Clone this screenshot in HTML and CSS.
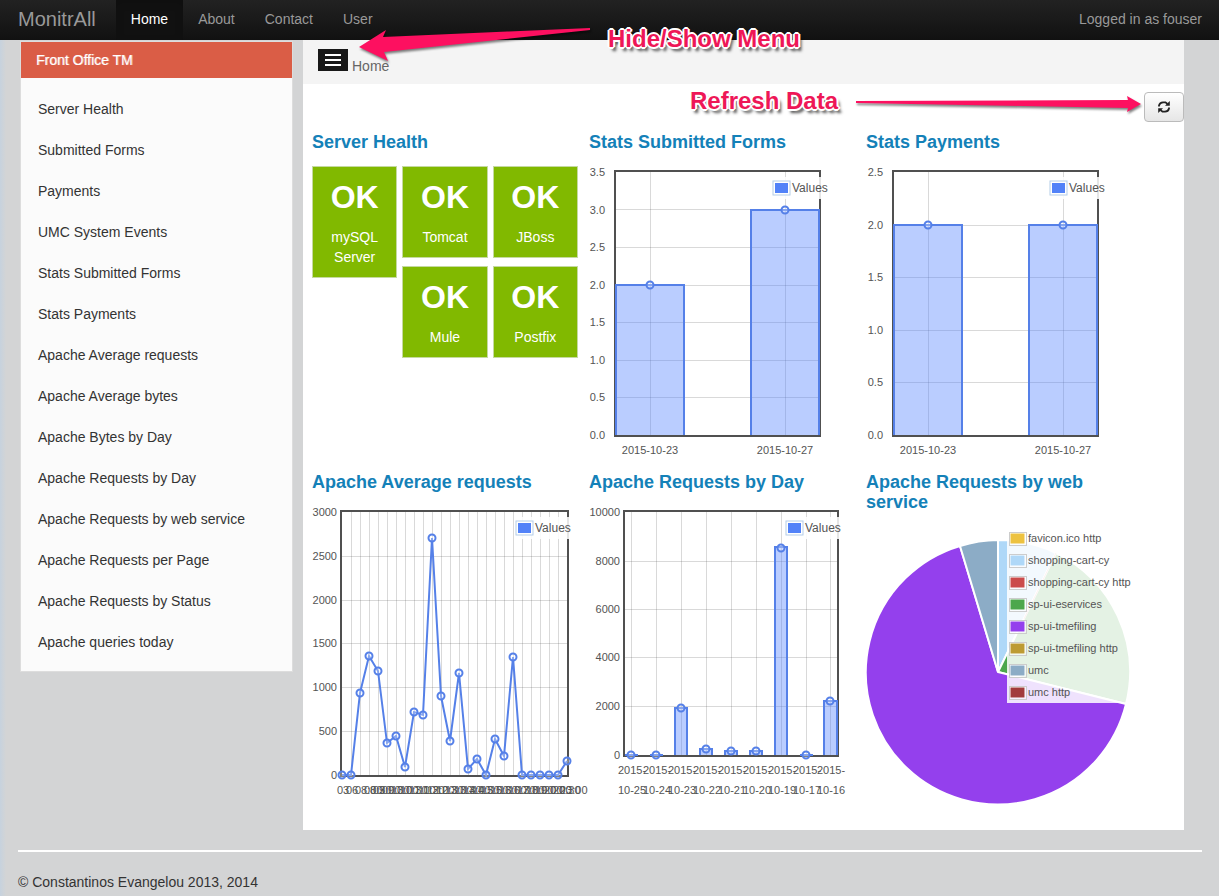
FILE: index.html
```html
<!DOCTYPE html>
<html lang="en">
<head>
<meta charset="utf-8">
<title>MonitrAll</title>
<link rel="stylesheet" href="styles.css">
</head>
<body>
<svg class="defs" aria-hidden="true">
  <defs>
    <marker id="dot" markerUnits="userSpaceOnUse" markerWidth="10" markerHeight="10" refX="5" refY="5">
      <circle class="dot" cx="5" cy="5" r="3.500"/>
    </marker>
  </defs>
</svg>

<header class="navbar">
  <a class="brand" href="#">MonitrAll</a>
  <nav class="nav">
    <a class="nav-link active" href="#">Home</a>
    <a class="nav-link" href="#">About</a>
    <a class="nav-link" href="#">Contact</a>
    <a class="nav-link" href="#">User</a>
  </nav>
  <span class="login">Logged in as fouser</span>
</header>

<div class="layout">
  <aside class="sidebar">
    <h2 class="side-title">Front Office TM</h2>
    <ul class="side-list">
      <li><a href="#">Server Health</a></li>
      <li><a href="#">Submitted Forms</a></li>
      <li><a href="#">Payments</a></li>
      <li><a href="#">UMC System Events</a></li>
      <li><a href="#">Stats Submitted Forms</a></li>
      <li><a href="#">Stats Payments</a></li>
      <li><a href="#">Apache Average requests</a></li>
      <li><a href="#">Apache Average bytes</a></li>
      <li><a href="#">Apache Bytes by Day</a></li>
      <li><a href="#">Apache Requests by Day</a></li>
      <li><a href="#">Apache Requests by web service</a></li>
      <li><a href="#">Apache Requests per Page</a></li>
      <li><a href="#">Apache Requests by Status</a></li>
      <li><a href="#">Apache queries today</a></li>
    </ul>
  </aside>

  <main class="content">
    <div class="crumbs">
      <button class="menu-btn" type="button" aria-label="Hide or show menu">
        <svg width="16" height="12" viewBox="0 0 16 12"><path d="M0 1h16M0 6h16M0 11h16" stroke="#fff" stroke-width="2"/></svg>
      </button>
      <span class="crumb">Home</span>
    </div>
    <div class="tools">
      <button class="refresh" type="button" aria-label="Refresh data">
        <svg width="14" height="14" viewBox="0 0 14 14">
          <path d="M2 6.500V5.500A4.200 4.200 0 0 1 6 2.300H8.500L10.500 4M12 7.500V8.500A4.200 4.200 0 0 1 8 11.700H5.500L3.500 10" fill="none" stroke="#222" stroke-width="1.800"/>
          <path d="M12.800 1v4.800H8zM1.200 13V8.200H6z" fill="#222"/>
        </svg>
      </button>
    </div>

    <div class="grid">
      <section class="card">
        <h4>Server Health</h4>
        <div class="tiles">
          <div class="tile tall"><strong>OK</strong><span>mySQL Server</span></div>
          <div class="tile"><strong>OK</strong><span>Tomcat</span></div>
          <div class="tile"><strong>OK</strong><span>JBoss</span></div>
          <div class="tile"><strong>OK</strong><span>Mule</span></div>
          <div class="tile"><strong>OK</strong><span>Postfix</span></div>
        </div>
      </section>

      <section class="card">
        <h4>Stats Submitted Forms</h4>
        <svg class="chart" viewBox="0 0 277 300" role="img" aria-label="Stats Submitted Forms">
          <rect class="frame" x="26" y="9" width="205" height="265"/>
          <path class="rules" d="M27 47.500H230M27 85.500H230M27 123.500H230M27 160.500H230M27 198.500H230M27 235.500H230M61.500 10V273M196.500 10V273"/>
          <path class="bar" d="M27 273V123H95V273M162 273V48H230V273"/>
          <circle class="dot" cx="61" cy="123" r="3.500"/><circle class="dot" cx="196" cy="48" r="3.500"/>
          <g class="ylab"><text x="16" y="14">3.5</text><text x="16" y="52">3.0</text><text x="16" y="89">2.5</text><text x="16" y="127">2.0</text><text x="16" y="164">1.5</text><text x="16" y="202">1.0</text><text x="16" y="239">0.5</text><text x="16" y="277">0.0</text></g>
          <g class="xlab"><text x="61" y="292">2015-10-23</text><text x="196" y="292">2015-10-27</text></g>
          <rect class="legend" x="182" y="15" width="58" height="22"/>
          <rect class="key" x="184" y="19" width="17" height="14"/><rect class="fill" x="186" y="21" width="13" height="10"/>
          <text x="203" y="30">Values</text>
        </svg>
      </section>

      <section class="card">
        <h4>Stats Payments</h4>
        <svg class="chart" viewBox="0 0 277 300" role="img" aria-label="Stats Payments">
          <rect class="frame" x="27" y="9" width="205" height="265"/>
          <path class="rules" d="M28 63.500H231M28 115.500H231M28 168.500H231M28 220.500H231M62.500 10V273M197.500 10V273"/>
          <path class="bar" d="M28 273V63H96V273M163 273V63H231V273"/>
          <circle class="dot" cx="62" cy="63" r="3.500"/><circle class="dot" cx="197" cy="63" r="3.500"/>
          <g class="ylab"><text x="17" y="14">2.5</text><text x="17" y="67">2.0</text><text x="17" y="119">1.5</text><text x="17" y="172">1.0</text><text x="17" y="224">0.5</text><text x="17" y="277">0.0</text></g>
          <g class="xlab"><text x="62" y="292">2015-10-23</text><text x="197" y="292">2015-10-27</text></g>
          <rect class="legend" x="182" y="15" width="58" height="22"/>
          <rect class="key" x="184" y="19" width="17" height="14"/><rect class="fill" x="186" y="21" width="13" height="10"/>
          <text x="203" y="30">Values</text>
        </svg>
      </section>

      <section class="card">
        <h4>Apache Average requests</h4>
        <svg class="chart" viewBox="0 0 277 300" role="img" aria-label="Apache Average requests">
          <rect class="frame" x="29" y="9" width="227" height="265"/>
          <path class="rules" d="M30 54.500H255M30 98.500H255M30 141.500H255M30 185.500H255M30 229.500H255M39.500 10V273M48.500 10V273M57.500 10V273M66.500 10V273M75.500 10V273M84.500 10V273M93.500 10V273M102.500 10V273M111.500 10V273M120.500 10V273M129.500 10V273M138.500 10V273M147.500 10V273M156.500 10V273M165.500 10V273M174.500 10V273M183.500 10V273M192.500 10V273M201.500 10V273M210.500 10V273M219.500 10V273M228.500 10V273M237.500 10V273M246.500 10V273"/>
          <polyline class="line" points="30,273 39,273 48,191 57,154 66,169 75,241 84,234 93,265 102,210 111,213 120,36 129,194 138,239 147,171 156,267 165,257 174,273 183,237 192,254 201,155 210,273 219,273 228,273 237,273 246,273 255,259"/>
          <g class="ylab"><text x="25" y="14">3000</text><text x="25" y="58">2500</text><text x="25" y="102">2000</text><text x="25" y="145">1500</text><text x="25" y="189">1000</text><text x="25" y="233">500</text><text x="25" y="277">0</text></g>
          <g class="times"><text x="25" y="292">03</text><text x="34" y="292">06</text><text x="43" y="292">08:00</text><text x="52" y="292">08:30</text><text x="61" y="292">09:00</text><text x="70" y="292">09:30</text><text x="79" y="292">10:00</text><text x="88" y="292">10:30</text><text x="97" y="292">11:00</text><text x="106" y="292">11:30</text><text x="115" y="292">12:00</text><text x="124" y="292">12:30</text><text x="133" y="292">13:00</text><text x="142" y="292">13:30</text><text x="151" y="292">14:00</text><text x="160" y="292">14:30</text><text x="169" y="292">15:00</text><text x="178" y="292">15:30</text><text x="187" y="292">16:00</text><text x="196" y="292">16:30</text><text x="205" y="292">17:00</text><text x="214" y="292">18:00</text><text x="223" y="292">19:00</text><text x="232" y="292">20:00</text><text x="241" y="292">20:30</text><text x="248" y="292">23:00</text></g>
          <rect class="legend" x="202" y="15" width="57" height="22"/>
          <rect class="key" x="204" y="19" width="17" height="14"/><rect class="fill" x="206" y="21" width="13" height="10"/>
          <text x="223" y="30">Values</text>
        </svg>
      </section>

      <section class="card">
        <h4>Apache Requests by Day</h4>
        <svg class="chart" viewBox="0 0 277 300" role="img" aria-label="Apache Requests by Day">
          <rect class="frame" x="35" y="9" width="214" height="245"/>
          <path class="rules" d="M36 59.500H248M36 107.500H248M36 155.500H248M36 204.500H248M42.500 10V253M67.500 10V253M92.500 10V253M117.500 10V253M142.500 10V253M167.500 10V253M192.500 10V253M217.500 10V253M241.500 10V253"/>
          <path class="bar" d="M36 253H49M61 253H74M86 253V206H98V253M111 253V247H123V253M136 253V249H148V253M161 253V249H173V253M186 253V45H198V253M211 253H224M235 253V199H248V253"/>
          <polyline class="dots" points="42,253 67,253 92,206 117,247 142,249 167,249 192,46 217,253 241,199"/>
          <g class="ylab"><text x="31" y="14">10000</text><text x="31" y="63">8000</text><text x="31" y="111">6000</text><text x="31" y="159">4000</text><text x="31" y="208">2000</text><text x="31" y="257">0</text></g>
          <g class="xlab"><text x="43" y="272">2015-</text><text x="68" y="272">2015-</text><text x="93" y="272">2015-</text><text x="118" y="272">2015-</text><text x="143" y="272">2015-</text><text x="168" y="272">2015-</text><text x="193" y="272">2015-</text><text x="218" y="272">2015-</text><text x="242" y="272">2015-</text>
          <text x="43" y="292">10-25</text><text x="68" y="292">10-24</text><text x="93" y="292">10-23</text><text x="118" y="292">10-22</text><text x="143" y="292">10-21</text><text x="168" y="292">10-20</text><text x="193" y="292">10-19</text><text x="218" y="292">10-17</text><text x="242" y="292">10-16</text></g>
          <rect class="legend" x="195" y="15" width="58" height="22"/>
          <rect class="key" x="197" y="19" width="17" height="14"/><rect class="fill" x="199" y="21" width="13" height="10"/>
          <text x="216" y="30">Values</text>
        </svg>
      </section>

      <section class="card">
        <h4>Apache Requests by web service</h4>
        <svg class="chart" viewBox="0 0 277 300" role="img" aria-label="Apache Requests by web service">
          <g class="pie">
            <path fill="#afd8f8" d="M132 150V18A132 132 0 0 1 190 31Z"/>
            <path fill="#4da74d" d="M132 150L190 31A132 132 0 0 1 260 182Z"/>
            <path fill="#9440ed" d="M132 150L260 182A132 132 0 1 1 94 24Z"/>
            <path fill="#8cacc6" d="M132 150L94 24A132 132 0 0 1 132 18Z"/>
          </g>
          <path d="M158 97L190 31" stroke="#cb4b4b" stroke-width="1" opacity=".5"/>
          <rect class="legend" x="141" y="5" width="128" height="176"/>
          <g class="swatches">
            <rect x="144" y="11" width="15" height="11" fill="#edc240"/><rect x="144" y="33" width="15" height="11" fill="#afd8f8"/><rect x="144" y="55" width="15" height="11" fill="#cb4b4b"/><rect x="144" y="77" width="15" height="11" fill="#4da74d"/><rect x="144" y="99" width="15" height="11" fill="#9440ed"/><rect x="144" y="121" width="15" height="11" fill="#bd9b33"/><rect x="144" y="143" width="15" height="11" fill="#8cacc6"/><rect x="144" y="165" width="15" height="11" fill="#a23c3c"/>
          </g>
          <g class="names"><text x="162" y="20">favicon.ico http</text><text x="162" y="42">shopping-cart-cy</text><text x="162" y="64">shopping-cart-cy http</text><text x="162" y="86">sp-ui-eservices</text><text x="162" y="108">sp-ui-tmefiling</text><text x="162" y="130">sp-ui-tmefiling http</text><text x="162" y="152">umc</text><text x="162" y="174">umc http</text></g>
        </svg>
      </section>
    </div>
  </main>
</div>

<footer class="footer">© Constantinos Evangelou 2013, 2014</footer>

<div class="note note-menu">Hide/Show Menu</div>
<div class="note note-refresh">Refresh Data</div>
<svg class="arrow arrow-menu" width="240" height="40" viewBox="0 0 240 40" aria-hidden="true"><path d="M1 21L28 4L25 11L232 2V4L26 26L30 35Z"/></svg>
<svg class="arrow arrow-refresh" width="290" height="20" viewBox="0 0 290 20" aria-hidden="true"><path d="M1 6L273 5L272 1L286 9L272 17L273 13L1 8Z"/></svg>
</body>
</html>
```
FILE: styles.css
```css
* { box-sizing: border-box; }

body {
  margin: 0;
  position: relative;
  font: 14px/20px "Liberation Sans", Arial, sans-serif;
  color: #333;
  background: linear-gradient(to right, #c6d2de 0, #d3d4d5 6px);
}

a { text-decoration: none; color: inherit; }
.defs { position: absolute; width: 0; height: 0; }

.navbar {
  display: flex;
  align-items: center;
  height: 40px;
  padding: 0 17px 0 18px;
  background: linear-gradient(#222, #111);
  color: #999;
}
.brand { font-size: 20px; margin-right: 20px; padding-bottom: 2px; }
.nav { display: flex; flex: 1; }
.nav-link { padding: 9px 15px 11px; }
.nav-link.active { color: #fff; background: #111; box-shadow: inset 0 3px 8px rgba(0, 0, 0, .125); }
.login { padding-bottom: 2px; }

.layout {
  display: flex;
  align-items: flex-start;
  gap: 10px;
  padding: 0 35px 0 20px;
}

.sidebar {
  flex: 0 0 273px;
  margin-top: 1px;
  border: 1px solid #ddd;
  background: #fbfbfb;
}
.side-title {
  margin: 0;
  padding: 8px 15px;
  font-size: 14px;
  font-weight: normal;
  line-height: 20px;
  color: #fff;
  background: #da5d46;
  text-shadow: 1px 0 rgba(255, 255, 255, .5);
}
.side-list { list-style: none; margin: 0; padding: 11px 0 8px; }
.side-list li { padding: 10px 17px 11px; }

.content { flex: 1; min-width: 0; background: #fff; padding-bottom: 8px; }
.crumbs {
  display: flex;
  align-items: flex-end;
  gap: 4px;
  height: 44px;
  padding: 0 15px 8px;
  background: #f4f4f4;
  color: #666;
}
.menu-btn {
  display: flex;
  align-items: center;
  justify-content: center;
  width: 30px;
  height: 22px;
  margin-bottom: 5px;
  padding: 0;
  border: 0;
  background: #181818;
}
.tools { display: flex; justify-content: flex-end; padding: 8px 0 10px; }
.refresh {
  display: flex;
  align-items: center;
  justify-content: center;
  width: 40px;
  height: 30px;
  padding: 0;
  border: 1px solid #bbb;
  border-radius: 4px;
  background: linear-gradient(#fff, #e6e6e6);
}

.grid {
  display: grid;
  grid-template-columns: repeat(3, 1fr);
  padding: 0 41px 0 9px;
}
.card { min-width: 0; min-height: 340px; }
.card h4 {
  margin: 0 0 10px;
  padding-right: 10px;
  font-size: 18px;
  line-height: 20px;
  color: #1481b8;
}

.tiles {
  display: grid;
  grid-template-columns: repeat(3, 1fr);
  gap: 8px 5px;
  margin: 14px 11px 0 0;
  align-items: start;
}
.tile {
  padding: 10px;
  border: 1px solid #c5d9a0;
  background: #81b900;
  color: #fff;
  text-align: center;
}
.tile.tall { grid-row: span 2; }
.tile strong { display: block; margin-bottom: 10px; font-size: 32px; line-height: 40px; }
.tile span { display: block; }

.chart { display: block; width: 100%; overflow: visible; }
.chart text { font-size: 12px; fill: #545454; }
.chart .ylab text { text-anchor: end; font-size: 11px; }
.chart .xlab text { text-anchor: middle; font-size: 11px; }
.chart .times text, .chart .names text { font-size: 11px; }
.frame { fill: #fff; stroke: #505050; stroke-width: 2; }
.rules { fill: none; stroke: rgba(84, 84, 84, .22); }
.bar { fill: rgba(82, 130, 255, .4); stroke: #5580e8; stroke-width: 2; }
.line { fill: none; stroke: #5580e8; stroke-width: 2; marker: url(#dot); }
.dots { fill: none; stroke: none; marker: url(#dot); }
.dot { fill: rgba(255, 255, 255, .3); stroke: #5580e8; stroke-width: 2; }
.legend { fill: #fff; fill-opacity: .85; }
.key { fill: #fff; stroke: #b4cde8; }
.fill { fill: #5282f8; }
.pie path { stroke: #fff; stroke-width: 2; }
.swatches rect { stroke: #fff; stroke-width: 1; outline: 1px solid #ccc; }

.footer {
  margin: 20px 17px 0 18px;
  padding: 20px 0 4px;
  border-top: 2px solid #fff;
}

.note {
  position: absolute;
  font-size: 24px;
  font-weight: bold;
  line-height: 28px;
  color: #ee1757;
  white-space: nowrap;
  text-shadow: -2px 0 #fff, 2px 0 #fff, 0 -2px #fff, 0 2px #fff, -1px -1px #fff, 1px 1px #fff, -1px 1px #fff, 1px -1px #fff, 3px 4px 3px rgba(0, 0, 0, .7);
}
.note-menu { left: 608px; top: 25px; }
.note-refresh { left: 690px; top: 87px; }
.arrow { position: absolute; filter: drop-shadow(1px 2px 1px rgba(0, 0, 0, .5)); }
.arrow path { fill: #fd1060; }
.arrow-menu { left: 358px; top: 26px; }
.arrow-refresh { left: 855px; top: 95px; }
```
